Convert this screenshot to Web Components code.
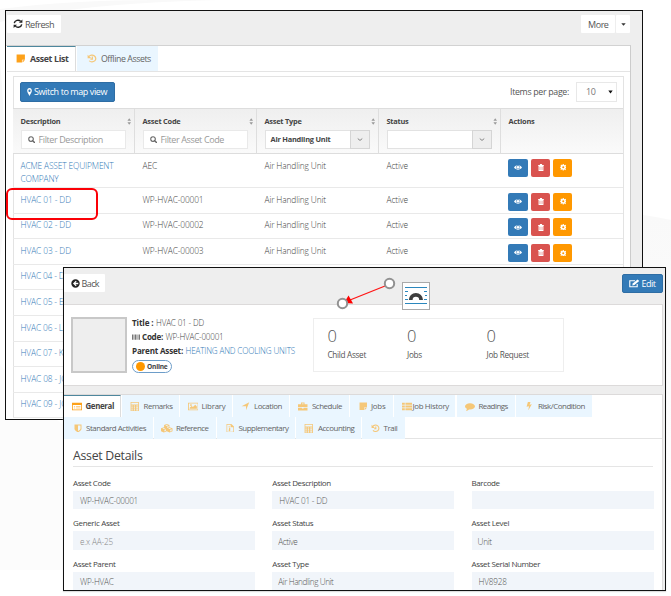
<!DOCTYPE html>
<html lang="en"><head><meta charset="utf-8"><title>Assets</title>
<style>
html,body{margin:0;width:671px;height:596px;overflow:hidden;background:#fff}
body{font:8.4px "Open Sans",sans-serif;color:#555}
</style></head><body>
<asset-page></asset-page>
<script>
const ICONS={
refresh:'<g fill="none" stroke="currentColor" stroke-width="2.3"><path d="M2 7A6 6 0 0 1 12.3 4"/><path d="M14 9A6 6 0 0 1 3.700 12"/></g><path d="M15 1v5.500H9.500zM1 15V9.500h5.500z"/>',
note:'<path d="M1 1h14v9h-5v5H1zM11 11h4l-4 4z"/>',
history:'<path fill="none" stroke="currentColor" stroke-width="2" d="M3.200 4.500A6 6 0 1 1 3.500 12M8.500 4.500V9H5.500"/><path d="M1 1.500V7.500H7z"/>',
pin:'<path fill-rule="evenodd" d="M8 0C3.500 0 .5 2.500.5 5.500.5 8 4 11 8 16c4-5 7.500-8 7.500-10.500C15.500 2.500 12.500 0 8 0zm0 3a3.400 2.400 0 1 1 0 4.800A3.400 2.400 0 0 1 8 3z"/>',
search:'<circle cx="6.500" cy="6.500" r="4.900" fill="none" stroke="currentColor" stroke-width="2.400"/><path d="M10 10l4.500 4.500" stroke="currentColor" stroke-width="3" stroke-linecap="round"/>',
eye:'<path fill-rule="evenodd" d="M0 8C4 1.500 12 1.500 16 8 12 14.500 4 14.500 0 8zm8-4.500a4.500 4.500 0 0 0-3.500 2A3.500 3.500 0 0 0 8 11a3.500 3.500 0 0 0 3.500-5.500 4.500 4.500 0 0 0-3.500-2z"/><circle cx="8" cy="7.500" r="3"/>',
trash:'<path fill-rule="evenodd" d="M5.500 0h5l.8 2.500H15.500v2h-1v11.500H1.500V4.500h-1v-2h4.200zM4.500 6.500v7h1v-7zm3 0v7h1v-7zm3 0v7h1v-7z"/>',
gear:'<path fill-rule="evenodd" d="M6.700 0h2.600l.4 2.300 1.500.6 2-1.300L15 3.500l-1.400 1.900.5 1.400 1.900.3v2.400l-2 .4-.6 1.500 1.300 2-1.700 1.700-2-1.400-1.500.6L9.300 16H6.700l-.4-2.200-1.500-.6-2 1.400-1.700-1.800 1.300-1.900-.6-1.500L0 9.200V6.900l2-.4.5-1.400-1.300-1.900L3 1.500l2 1.300 1.300-.5zM8 5.500a2.500 2.500 0 1 0 0 5 2.500 2.500 0 0 0 0-5z"/>',
back:'<path fill-rule="evenodd" d="M8 .5a7.500 7.500 0 1 0 0 15 7.500 7.500 0 0 0 0-15zM8.500 3L10 4.500 7.900 6.800H13v2.400H7.900L10 11.500 8.500 13l-5-5z"/>',
edit:'<path fill="none" stroke="currentColor" stroke-width="1.700" d="M12.500 9v4.700H1.200V3.200h8"/><path d="M5 11.500l.7-3.400L13 .8l2.600 2.600-7.300 7.400z"/>',
card:'<path fill-rule="evenodd" d="M0 1.500h16v13H0zm1.300 4v7.700h13.400V5.500zM3 7h2v1.200H3zm3.500 0h7v1.200h-7zM3 10h2v1.200H3zm3.500 0h7v1.200h-7z"/>',
calc:'<path fill-rule="evenodd" d="M1 0h14v16H1zm1.300 1.300v3h11.400v-3zM2.500 6v2h2V6zm4 0v2h2V6zm4 0v2h3V6zm-8 3.500v2h2v-2zm4 0v2h2v-2zm4 0v2h3v-2zm-8 3.500v2h2v-2zm4 0v2h2v-2zm4 0v2h3v-2z"/>',
image:'<path fill-rule="evenodd" d="M0 1.500h16v13H0zm1.300 1.300v10.400h13.400V2.800zM2.500 12v-2l3-3 2 2 3.500-4 2.500 3v4zM4.500 3.800a1.500 1.500 0 1 1 0 3 1.500 1.500 0 0 1 0-3z"/>',
arrow:'<path d="M15.500 .5L9.500 15.500V7.800H1z"/>',
case:'<path fill-rule="evenodd" d="M5 1h6v3h5v5H0V4h5zm1.500 1.500V4h3V2.500zM0 10h6.500v1.500h3V10H16v5H0z"/>',
list:'<path d="M0 1.500h4.500v3.500H0zm5.500 0H16v3.500H5.500zM0 6.300h4.500v3.500H0zm5.500 0H16v3.500H5.500zM0 11h4.500v3.500H0zm5.500 0H16v3.500H5.500z"/>',
chat:'<path d="M8 2c4.500 0 8 2.300 8 5.700S12.500 13.400 8 13.400l-1.500-.1C5 14.800 3.500 15.500 1.500 15.500c1-1 1.500-2 1.500-3.300C1.200 11.200 0 9.600 0 7.700 0 4.300 3.500 2 8 2z"/>',
bolt:'<path d="M5 0h7L9.500 5l6-1L6 16l2-8L1.500 9z"/>',
shield:'<path fill-rule="evenodd" d="M1 1h14v8c0 3-4 5-7 7-3-2-7-4-7-7zM8 3v10.500c2-1.300 5-3 5-5V3z"/>',
cubes:'<path fill-rule="evenodd" d="M8 0l3.700 1.700v4L16 7.500v5.200L12 15 8 12.800 4 15 0 12.700V7.500l4.300-1.800v-4zM8 1.500L6 2.400l2 1 2-1zm.7 3v2.700l1.900-1V3.700zM4 7L1.800 8 4 9l2.200-1zm.8 3.200v3l2-1.100V9.300zM12 7L9.800 8l2.200 1 2.200-1zm.8 3.200v3l2-1.100V9.300z"/>',
file:'<path fill-rule="evenodd" d="M1 0H10l5 4.500V16H1zm1.300 1.300v13.400h11.400V6H8.700V1.300zM5 4h2v2H5zm1 3h2v5c0 2-3 2-3 0z"/>',
chev:'<path d="M2 5l6 6 6-6" fill="none" stroke="currentColor" stroke-width="2.600"/>',
down:'<path d="M1 4h14L8 12z"/>',
sort:'<path d="M1.500 6.500h13L8 .5zM1.500 9.500h13L8 15.500z"/>',
bars:'<path d="M0 1h2v14H0zm3 0h1v14H3zm2 0h3v14H5zm4 0h1v14H9zm2 0h1.500v14H11zm2.500 0H16v14h-2.500z"/>'
};
function define(name,css,html,after){
 const t=document.createElement('template');
 t.innerHTML=`<style>*{box-sizing:border-box}${css}</style>${html}`;
 customElements.define(name,class extends HTMLElement{
  connectedCallback(){ if(this.shadowRoot)return;
   const r=this.attachShadow({mode:'open'});r.append(t.content.cloneNode(true));after&&after(this,r);}
 });
}
/* Label whose tracking is adjusted so that it spans the given width. */
define('fit-text',':host{display:inline-block;white-space:pre;flex:none}span{display:inline-block}','<span><slot></slot></span>',(h,r)=>{
 const s=r.querySelector('span'),w=+h.getAttribute('w');h.style.width=w+'px';
 s.style.letterSpacing=(w-s.getBoundingClientRect().width)/h.textContent.length+'px';
});
define('ui-icon',':host{display:inline-block;width:10px;height:10px;flex:none}svg{display:block;width:100%;height:100%}','<svg viewBox="0 0 16 16" fill="currentColor" preserveAspectRatio="none"></svg>',(h,r)=>{
 r.querySelector('svg').innerHTML=ICONS[h.getAttribute('name')];
 if(h.hasAttribute('w'))h.style.width=h.getAttribute('w')+'px';
 if(h.hasAttribute('h'))h.style.height=h.getAttribute('h')+'px';
});
define('ui-button',':host{display:flex;align-items:center;height:18px;background:#fff;color:#555;box-sizing:border-box;font-size:9px;border-radius:1px;flex:none}:host([kind=primary]){background:#337ab7;color:#fff;border:1px solid #2e6da4;border-radius:2px}','<slot></slot>');
define('app-window',':host{display:flex;flex-direction:column;position:absolute;box-sizing:border-box;border:1px solid #111;overflow:hidden;background:#eee}','<slot></slot>');
/* One tab; positions of its icon and caption are given along the tab strip. */
function tab(x,w,icon,ix,iw,text,tx,tw,active){
 return `<tab-box style="width:${w}px;margin-right:1.4px" ${active?'active':''}><ui-icon name="${icon}" w="${iw}" h="${iw>9?9:8.5}" style="margin-left:${ix-x}px"></ui-icon><fit-text w="${tw}" style="margin-left:${tx-ix-iw}px">${text}</fit-text></tab-box>`;
}
define('tab-box',':host{display:flex;align-items:center;box-sizing:border-box;padding-bottom:1px;background:#eaf6ff;color:#646464;border-top:1px solid #eaf6ff;flex:none}:host([active]){background:#fff;border-top-color:#4d879d;border-right:1px solid #ddd;color:#444;font-weight:700}::slotted(ui-icon){color:#f5c778}:host([active]) ::slotted(ui-icon){color:#fda11a}','<slot></slot>');
define('column-head',':host{display:block;width:122px;flex:none;box-sizing:border-box;height:45px;border-right:1px solid #dedede;padding:7px 8px 0 7.5px;font-size:7.400px;font-weight:700;color:#444}.t{display:flex;align-items:center;justify-content:space-between;height:11px;margin:0 -5px 3px 0;line-height:11px}ui-icon{width:4.500px;height:7px;color:#999}:host([plain]) ui-icon{display:none}:host([plain]){border:0}',
'<div class="t"><slot name="title"></slot><ui-icon name="sort"></ui-icon></div><slot></slot>');
define('filter-input',':host{display:flex;align-items:center;height:19px;background:#fff;border:1px solid #e9e9e9;box-sizing:border-box;font-size:9px;font-weight:400;color:#999}ui-icon{margin:0 3.5px 0 6px;color:#666}','<ui-icon name="search" w="7.5" h="7.5"></ui-icon><slot></slot>');
define('filter-select',':host{display:flex;align-items:center;height:18.500px;width:105px;background:#fff;border:1px solid #e2e2e2;box-sizing:border-box;padding-left:5px}div{margin-left:auto;width:20px;height:18.500px;border:1px solid #d5d5d5;background:#eee;display:flex;align-items:center;justify-content:center;flex:none;margin-right:-1px;color:#777}','<slot></slot><div><ui-icon name="chev" w="6" h="5"></ui-icon></div>');
define('asset-row',`:host{display:flex;box-sizing:border-box;height:25.62px;border-bottom:1px solid #e9e9e9;padding:4.6px 0 0 7.5px;line-height:13px;font-weight:300;font-size:8.400px;color:#444;flex:none}:host([tall]){height:34px;padding-top:5px}:host([tall]) .a{margin-top:-.5px}
 .c{width:122px;flex:none}.l{color:#337ab7}.c ::slotted(fit-text),.c fit-text{display:block}.a{display:flex;height:18px;margin-left:-.6px}:host([brief]) .x{display:none}.b{height:18px;color:#fff;border-radius:2px;display:flex;align-items:center;justify-content:center}`,
`<div class="c l"><slot></slot></div><div class="c"><slot name="code"></slot></div><div class="c x"><fit-text w="61.5">Air Handling Unit</fit-text></div><div class="c x"><fit-text w="21.500">Active</fit-text></div><div class="a x"><div class="b" style="width:20px;background:#337ab7;margin-right:3.5px"><ui-icon name="eye" w="8" h="7"></ui-icon></div><div class="b" style="width:18.5px;background:#d9534f;margin-right:3.5px"><ui-icon name="trash" w="6" h="7"></ui-icon></div><div class="b" style="width:19px;background:#ff9800"><ui-icon name="gear" w="6.5" h="6.5"></ui-icon></div></div>`);
define('asset-list',`:host{display:flex;flex-direction:column;height:100%}
.top{height:34px;display:flex;justify-content:space-between;padding:4px 12px 0 1px;flex:none}
.panel{flex:none;height:380px;width:625px;border-top:1px solid #d2d2d2;border-right:1px solid #ccc;background:#fff;margin-left:0;padding-left:1px}
.tabs{display:flex;height:25.500px;border-bottom:1px solid #e4e4e4}.tabs tab-box{height:25px}
.inner{margin:4px 6px 0 6px;border:1.500px solid #e3e3e3;border-bottom:0;width:611px}
.tool{height:31.500px;display:flex;align-items:center;padding:0 6.5px 1px 5.5px}
.head,asset-row{margin-left:-1px}
.head{display:flex;border-top:1px solid #ddd;border-bottom:1px solid #ddd;background:linear-gradient(#efefef,#fafafa);height:46px}
.sel{margin-left:7px;width:40.500px;height:20px;border:1px solid #e8e8e8;display:flex;align-items:center;font-size:9px;color:#777;flex:none}`,
`<div class="top"><ui-button style="width:53.5px;font-size:9.2px"><ui-icon name="refresh" w="10" h="9.5" style="margin:0 2px 0 6px;color:#222"></ui-icon><fit-text w="29">Refresh</fit-text></ui-button><div style="display:flex;gap:1px"><ui-button style="width:34px;padding-left:7px"><fit-text w="20.500">More</fit-text></ui-button><ui-button style="width:14px;padding-left:5px"><ui-icon name="down" w="5" h="5" style="color:#333"></ui-icon></ui-button></div></div>
<div class="panel"><div class="tabs" style="font-size:8.8px">${tab(7,69,'note',16,9.5,'Asset List',30,38.5,1)}${tab(77.500,81,'history',87,10,'Offline Assets',101,50)}</div>
<div class="inner"><div class="tool"><ui-button kind="primary" style="width:95px;height:19.5px;font-size:9px"><ui-icon name="pin" w="5" h="8" style="margin:0 2px 0 6.5px"></ui-icon><fit-text w="73">Switch to map view</fit-text></ui-button><fit-text w="59" style="margin-left:auto;font-size:8.8px">Items per page:</fit-text><div class="sel"><fit-text w="9.500" style="margin-left:9px">10</fit-text><ui-icon name="down" w="5" h="6" style="margin-left:12.5px;color:#111"></ui-icon></div></div>
<div class="head"><column-head><fit-text slot="title" w="40">Description</fit-text><filter-input><fit-text w="64.500">Filter Description</fit-text></filter-input></column-head><column-head><fit-text slot="title" w="38">Asset Code</fit-text><filter-input><fit-text w="63.500">Filter Asset Code</fit-text></filter-input></column-head><column-head><fit-text slot="title" w="37">Asset Type</fit-text><filter-select><fit-text w="60">Air Handling Unit</fit-text></filter-select></column-head><column-head><fit-text slot="title" w="22">Status</fit-text><filter-select></filter-select></column-head><column-head plain><fit-text slot="title" w="26">Actions</fit-text></column-head></div>
<asset-row tall><fit-text w="93">ACME ASSET EQUIPMENT</fit-text><fit-text w="38">COMPANY</fit-text><fit-text slot="code" w="14.500">AEC</fit-text></asset-row>
${[['HVAC 01 - DD',50.5,'WP-HVAC-00001'],['HVAC 02 - DD',50.5,'WP-HVAC-00002'],['HVAC 03 - DD',50.5,'WP-HVAC-00003'],['HVAC 04 - D',44],['HVAC 05 - B',43.5],['HVAC 06 - L',42.5],['HVAC 07 - K',43],['HVAC 08 - JO',47],['HVAC 09 - JO',47]].map(a=>`<asset-row ${a[2]?'':'brief'}><fit-text w="${a[1]}">${a[0]}</fit-text>${a[2]?`<fit-text slot="code" w="61">${a[2]}</fit-text>`:''}</asset-row>`).join('')}
</div></div>`);
define('stat-tile',':host{display:block;width:79.500px;flex:none;color:#555}b{display:block;font:300 16.500px/20px "Open Sans",sans-serif;margin-bottom:2.500px}div{line-height:11px;font-size:8.200px}','<b><slot name="n"></slot></b><div><slot></slot></div>');
define('form-field',':host{display:block;width:182px;flex:none;font-size:8px;color:#444}.l{height:12px;line-height:12px;margin-bottom:2px}.v{height:18.500px;background:#f1f5fa;display:flex;align-items:center;padding-left:7px;padding-top:1px;font-size:8.200px;font-weight:300;color:#555}','<div class="l"><slot name="label"></slot></div><div class="v"><slot></slot></div>');
const field=(l,w,v,vw,pad=0,ph)=>`<form-field><fit-text slot="label" w="${w}">${l}</fit-text>${v?`<fit-text w="${vw}" style="margin-left:${pad}px;${ph?'color:#888':''}">${v}</fit-text>`:''}</form-field>`;
define('asset-detail',`:host{display:block}
.top{height:36px;display:flex;justify-content:space-between;padding:6px 2px 0 0;flex:none}
.panel{width:599px;border:1px solid #dcdada;border-left:0;background:#fff}
.sum{height:82px;display:flex;padding:12px 0 0 7px}
.photo{width:55.500px;height:56px;border:2px solid #c8c8c8;background:#eee;flex:none}
.info{margin-left:5.500px;width:181px;flex:none;display:flex;flex-direction:column;font-size:8.100px;line-height:14px;margin-top:-1.500px}
.info>div{display:flex;height:14px;align-items:center;font-weight:300;color:#444}.info .h{font-weight:700;color:#333;margin-right:2.500px}
.pill{width:40px;height:13px!important;border:1px solid #6d9dc9;border-radius:7px;font-weight:700!important;font-size:6.600px;margin-top:2.500px;padding-left:2.500px}.pill i{width:9px;height:9px;border-radius:50%;background:#ff9800;margin-right:2.500px}
.stats{width:251px;height:54px;margin-top:1px;border:1px solid #eee;display:flex;padding:7px 0 0 13.500px}
.main{margin-top:8px;height:230px}.tr{display:flex;height:22px;font-size:7.900px}.tr tab-box{height:22px}
.bar{border-bottom:1px solid #e4e4e4}
h2{font:400 12.300px/17px "Open Sans",sans-serif;margin:8px 9px 0;height:19.500px;border-bottom:1px solid #e5e5e5;color:#444}
.form{display:grid;grid-template-columns:182px 182px 182px;column-gap:17.300px;row-gap:8px;margin:10.300px 0 0 9px}`,
`<div class="top"><ui-button style="width:41px"><ui-icon name="back" w="9" h="9" style="margin:0 2px 0 6.5px;color:#222"></ui-icon><fit-text w="17.500">Back</fit-text></ui-button><ui-button kind="primary" style="width:41px;height:19px"><ui-icon name="edit" w="10.500" h="9" style="margin:0 2px 0 6px"></ui-icon><fit-text w="14">Edit</fit-text></ui-button></div>
<div class="panel sum"><div class="photo"></div><div class="info"><div><fit-text class="h" w="21.500">Title :</fit-text><fit-text w="48">HVAC 01 - DD</fit-text></div><div><ui-icon name="bars" w="8" h="6" style="margin-right:2px;color:#777"></ui-icon><fit-text class="h" w="21">Code:</fit-text><fit-text w="58">WP-HVAC-00001</fit-text></div><div><fit-text class="h" w="51">Parent Asset:</fit-text><fit-text w="109.500" style="color:#337ab7">HEATING AND COOLING UNITS</fit-text></div><div class="pill"><i></i><fit-text w="20.500">Online</fit-text></div></div>
<div class="stats"><stat-tile><span slot="n">0</span><fit-text w="38.500">Child Asset</fit-text></stat-tile><stat-tile><span slot="n">0</span><fit-text w="15">Jobs</fit-text></stat-tile><stat-tile><span slot="n">0</span><fit-text w="42.500">Job Request</fit-text></stat-tile></div></div>
<div class="panel main"><div class="tr">${tab(64,57,'card',72,10,'General',85.5,28.5,1)}${tab(122.4,56.5,'calc',130.5,9.5,'Remarks',143.5,29)}${tab(180.3,51.3,'image',188,10.5,'Library',201.5,24)}${tab(233,55.6,'arrow',241.5,8.5,'Location',254,28)}${tab(290,59,'case',298.5,9.5,'Schedule',312,30)}${tab(350.4,42.2,'note',359,8.5,'Jobs',371,14.5)}${tab(394,61.2,'list',402,10,'Job History',412.5,36.500)}${tab(456.600,58.4,'chat',465,10,'Readings',478.5,29.5)}${tab(516.4,75.6,'bolt',526,6,'Risk/Condition',538,47)}</div>
<div class="tr bar">${tab(64,89.1,'shield',74,8,'Standard Activities',86,60)}${tab(154.5,61.6,'cubes',161.5,11.5,'Reference',176,32.5)}${tab(217.500,77.6,'file',226,8.5,'Supplementary',238.5,50)}${tab(296.5,64.6,'calc',304.5,9.5,'Accounting',318,36.500)}${tab(362.5,42.5,'history',371,9,'Trail',383.5,14)}</div>
<h2><fit-text w="69.500">Asset Details</fit-text></h2>
<div class="form">${field('Asset Code',37.5,'WP-HVAC-00001',58)}${field('Asset Description',58.5,'HVAC 01 - DD',48)}${field('Barcode',28)}${field('Generic Asset',46.5,'e.x AA-25',33,0,1)}${field('Asset Status',41,'Active',19,-1)}${field('Asset Level',37.5,'Unit',14,-1)}${field('Asset Parent',42.5,'WP-HVAC',33.5)}${field('Asset Type',36.5,'Air Handling Unit',55,-1)}${field('Asset Serial Number',68.5,'HV8928',28)}</div></div>`);
define('page-marks',':host{position:absolute;inset:0;pointer-events:none}svg{display:block}',
`<svg width="671" height="596"><rect x="7" y="189" width="90" height="30" rx="5" fill="none" stroke="#fb0007" stroke-width="2"/>
<path d="M385 286L350 300" stroke="#ff1515" stroke-width="1.300"/><path d="M344 303L348.500 295.500L353 303.500z" fill="#f00"/>
<g fill="#fff" stroke="#929292" stroke-width="2"><circle cx="389.500" cy="283.500" r="4.700"/><circle cx="342.500" cy="303.500" r="4.700"/></g>
<rect x="402.500" y="282.500" width="27" height="27" fill="#fff" stroke="#aaa"/><path d="M405 287.500h22M405 291.500h3M424 291.500h3M405 295.500h2M425 295.500h2M405 299.500h3M424 299.500h3M405 303.500h22" stroke="#2b87bd"/><path d="M410.700 300a5.200 5.200 0 0 1 10.400 0" fill="none" stroke="#3e3e3e" stroke-width="3.800"/></svg>`);
define('asset-page',':host{display:block;position:relative;width:671px;height:596px;overflow:hidden}.bg{position:absolute;inset:0}',
`<svg class="bg" width="671" height="596"><defs><linearGradient id="g" x1="0" y1="0" x2="0" y2="1"><stop stop-color="#f9f9f9"/><stop offset="1" stop-color="#fefefe"/></linearGradient></defs><path d="M0 9Q70 0 160 0H220Q80 3 0 22zM0 60Q10 180 0 260z" fill="#f9f9f9"/><path d="M643 215Q658 217 671 220V500H643z" fill="url(#g)"/><path d="M0 365Q20 390 63 425V570H0z" fill="#fcfcfc"/></svg>
<app-window style="left:5px;top:10px;width:638px;height:410px"><asset-list></asset-list></app-window>
<app-window style="left:63px;top:267px;width:603px;height:324px;box-shadow:0 1px 1px #ddd"><asset-detail></asset-detail></app-window><page-marks></page-marks>`);
</script></body></html>
